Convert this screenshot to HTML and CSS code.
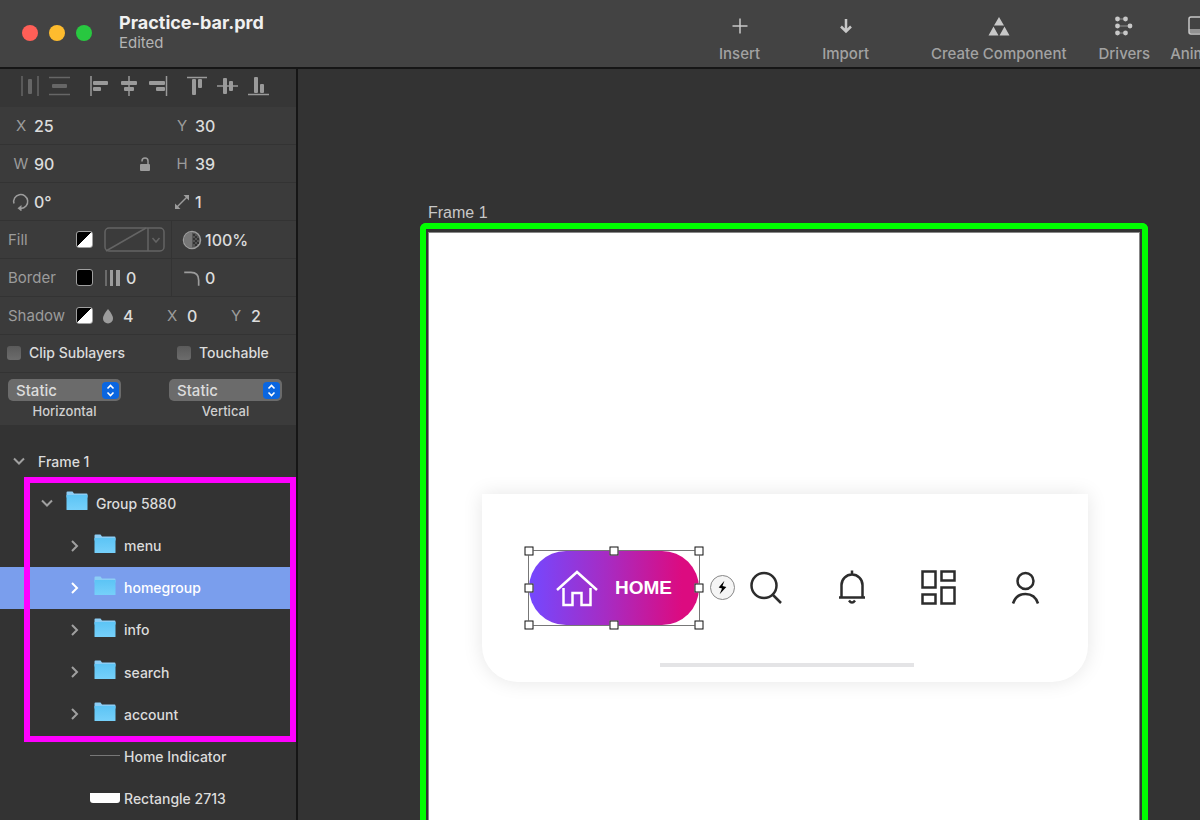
FILE: index.html
```html
<!DOCTYPE html>
<html lang="en">
<head>
  <meta charset="UTF-8">
  <title>Practice-bar.prd</title>
  <link rel="stylesheet" href="styles.css">
</head>
<body>

<svg class="defs">
  <linearGradient id="folder-fill" x1="0" y1="0" x2="0" y2="1">
    <stop offset="0" stop-color="#5cc4f5"/>
    <stop offset="1" stop-color="#76d0fa"/>
  </linearGradient>
  <symbol id="folder" viewBox="0 0 22 20">
    <path d="M.5 1.500q0-1 1-1h5l1.500 2h12.500q1 0 1 1v3H.5z" fill="#8ccdf5"/>
    <path d="M.5 4h21v14.500q0 .5-.5.5H1q-.5 0-.5-.5z" fill="url(#folder-fill)"/>
  </symbol>
  <symbol id="chevron-down" viewBox="0 0 12 12">
    <path d="M1 3.500l5 5 5-5" fill="none" stroke="currentColor" stroke-width="2"/>
  </symbol>
  <symbol id="chevron-right" viewBox="0 0 12 12">
    <path d="M3 1l5 5-5 5" fill="none" stroke="currentColor" stroke-width="2"/>
  </symbol>
  <symbol id="stepper" viewBox="0 0 17 17">
    <rect width="17" height="17" rx="4" fill="#0a66e0"/>
    <path d="M5.500 6.500l3-3 3 3M5.500 10.500l3 3 3-3" fill="none" stroke="#fff" stroke-width="1.600"/>
  </symbol>
</svg>

<header class="toolbar">
  <div class="lights">
    <span class="light red"></span>
    <span class="light yellow"></span>
    <span class="light green"></span>
  </div>
  <div class="title">
    <h1>Practice-bar.prd</h1>
    <p>Edited</p>
  </div>
  <div class="tools">
    <div class="tool-group wide">
      <button class="tool">
        <svg viewBox="0 0 24 24"><path d="M12 4.500v15M4.500 12h15" stroke="currentColor" stroke-width="1.500"/></svg>
        Insert
      </button>
      <button class="tool">
        <svg viewBox="0 0 24 24"><path d="M12 5v13M7 12.500l5 5 5-5" fill="none" stroke="currentColor" stroke-width="2.500"/></svg>
        Import
      </button>
      <button class="tool">
        <svg viewBox="0 0 24 24"><path d="M12 3l5 8.500H7zM6.500 12.500l5 9h-10zM17.500 12.500l5 9h-10z" fill="currentColor"/></svg>
        Create Component
      </button>
    </div>
    <div class="tool-group">
      <button class="tool">
        <svg viewBox="0 0 24 24">
          <path d="M5 5h8M5 12h13M5 19h8" stroke="currentColor" stroke-width="1" opacity=".6"/>
          <g fill="currentColor">
            <circle cx="5.500" cy="5" r="2.400"/><circle cx="13.500" cy="5" r="2.400"/>
            <circle cx="5.500" cy="12" r="2.400"/><circle cx="18" cy="12" r="2.400"/>
            <circle cx="5.500" cy="19" r="2.400"/><circle cx="13.500" cy="19" r="2.400"/>
          </g>
        </svg>
        Drivers
      </button>
      <button class="tool">
        <svg viewBox="0 0 24 24"><rect x="1" y="3" width="22" height="17" rx="2" fill="none" stroke="currentColor" stroke-width="1.500"/><path d="M1 15h22v4H1z" fill="currentColor" opacity=".6"/></svg>
        Animate
      </button>
    </div>
  </div>
</header>

<div class="workspace">
  <aside class="sidebar">
    <div class="align-bar">
      <div class="align-group dim">
        <button aria-label="Distribute horizontally"><svg viewBox="0 0 22 22"><path d="M3 1v20M19 1v20" stroke="currentColor" stroke-width="1.500"/><rect x="9" y="4" width="4" height="15" rx="1" fill="currentColor"/></svg></button>
        <button aria-label="Distribute vertically"><svg viewBox="0 0 22 22"><path d="M0 2.500h21M0 19.500h21" stroke="currentColor" stroke-width="1.500"/><rect x="3" y="9" width="15" height="4" rx="1" fill="currentColor"/></svg></button>
      </div>
      <div class="align-group">
        <button aria-label="Align left"><svg viewBox="0 0 22 22"><path d="M3 1v20" stroke="currentColor" stroke-width="1.500"/><rect x="5" y="6" width="15" height="4" rx="1" fill="currentColor"/><rect x="5" y="12" width="8" height="4" rx="1" fill="currentColor"/></svg></button>
        <button aria-label="Align center"><svg viewBox="0 0 22 22"><path d="M11 1v20" stroke="currentColor" stroke-width="1.500"/><rect x="3" y="6" width="16" height="4" rx="1" fill="currentColor"/><rect x="6" y="12" width="10" height="4" rx="1" fill="currentColor"/></svg></button>
        <button aria-label="Align right"><svg viewBox="0 0 22 22"><path d="M18.500 1v20" stroke="currentColor" stroke-width="1.500"/><rect x="1" y="6" width="16" height="4" rx="1" fill="currentColor"/><rect x="8" y="12" width="9" height="4" rx="1" fill="currentColor"/></svg></button>
      </div>
      <div class="align-group">
        <button aria-label="Align top"><svg viewBox="0 0 22 22"><path d="M0 2.500h20" stroke="currentColor" stroke-width="1.500"/><rect x="5" y="4" width="4" height="16" rx="1" fill="currentColor"/><rect x="11" y="4" width="4" height="9" rx="1" fill="currentColor"/></svg></button>
        <button aria-label="Align middle"><svg viewBox="0 0 22 22"><path d="M0 11h21" stroke="currentColor" stroke-width="1.500"/><rect x="6" y="3" width="4" height="16" rx="1" fill="currentColor"/><rect x="12" y="6" width="4" height="10" rx="1" fill="currentColor"/></svg></button>
        <button aria-label="Align bottom"><svg viewBox="0 0 22 22"><path d="M1 19.500h21" stroke="currentColor" stroke-width="1.500"/><rect x="7" y="2" width="4" height="16" rx="1" fill="currentColor"/><rect x="13" y="9" width="4" height="9" rx="1" fill="currentColor"/></svg></button>
      </div>
    </div>

    <div class="row">
      <div class="cell">
        <label for="pos-x">X</label>
        <input type="text" id="pos-x" value="25">
      </div>
      <div class="cell">
        <label for="pos-y">Y</label>
        <input type="text" id="pos-y" value="30">
      </div>
    </div>
    <div class="row">
      <div class="cell">
        <label for="width">W</label>
        <input type="text" id="width" value="90">
        <button class="lock" aria-label="Lock ratio"><svg viewBox="0 0 12 14"><rect x="1" y="7" width="10" height="7" rx="1" fill="currentColor"/><path d="M3 4.500V4a3 3 0 0 1 6 0v3" fill="none" stroke="currentColor" stroke-width="1.500"/></svg></button>
      </div>
      <div class="cell">
        <label for="height">H</label>
        <input type="text" id="height" value="39">
      </div>
    </div>
    <div class="row">
      <div class="cell">
        <label for="rotation" aria-label="Rotation"><svg viewBox="0 0 18 18"><path d="M2 10.500A7 7 0 1 1 9 15.500" fill="none" stroke="currentColor" stroke-width="1.500"/><path d="M9.500 12v6.500L5.500 15.200z" fill="currentColor"/></svg></label>
        <input type="text" id="rotation" value="0°">
      </div>
      <div class="cell">
        <label for="scale" aria-label="Scale"><svg viewBox="0 0 18 18"><path d="M4 14L14 4" stroke="currentColor" stroke-width="1.500"/><path d="M10.500 2H16v5.500zM2 10.500V16h5.500z" fill="currentColor"/></svg></label>
        <input type="text" id="scale" value="1">
      </div>
    </div>

    <div class="row paint">
      <div class="cell">
        <span class="name">Fill</span>
        <button class="swatch half" aria-label="Fill colour"></button>
        <button class="picker" aria-label="Fill type">
          <svg viewBox="0 0 61 25"><rect x="1" y="1" width="59" height="23" rx="4"/><path d="M2 24L42 1M44 1v23"/><path d="M48.500 11l3.500 4 3.500-4"/></svg>
        </button>
      </div>
      <div class="cell">
        <label for="opacity" aria-label="Opacity"><svg viewBox="0 0 20 20"><circle cx="10" cy="10" r="8.500" fill="#555" stroke="currentColor" stroke-width="1.500"/><path d="M10 2a8 8 0 0 0 0 16z" fill="#777"/><path d="M11 4h2v2h-2zM13 6h2v2h-2zM11 8h2v2h-2zM15 8h2v2h-2zM13 10h2v2h-2zM11 12h2v2h-2zM15 12h2v2h-2zM13 14h2v2h-2z" fill="#333"/></svg></label>
        <input type="text" id="opacity" value="100%">
      </div>
    </div>
    <div class="row paint">
      <div class="cell">
        <span class="name">Border</span>
        <button class="swatch" aria-label="Border colour"></button>
        <label for="border-width" aria-label="Border width"><svg viewBox="0 0 16 18"><path d="M1 1v16" stroke="currentColor" stroke-width="1"/><path d="M6.500 1v16" stroke="currentColor" stroke-width="3"/><path d="M13 1v16" stroke="currentColor" stroke-width="4"/></svg></label>
        <input type="text" id="border-width" value="0">
      </div>
      <div class="cell">
        <label for="radius" aria-label="Corner radius"><svg viewBox="0 0 18 18"><path d="M2 4h6q7 0 7 7v5" fill="none" stroke="currentColor" stroke-width="1.500"/></svg></label>
        <input type="text" id="radius" value="0">
      </div>
    </div>
    <div class="row shadow">
      <span class="name">Shadow</span>
      <button class="swatch half" aria-label="Shadow colour"></button>
      <label for="blur" aria-label="Blur"><svg viewBox="0 0 12 16"><path d="M6 1q5 6 5 9.500a5 5 0 0 1-10 0Q1 7 6 1z" fill="currentColor"/></svg></label>
      <input type="text" id="blur" value="4">
      <label for="shadow-x">X</label>
      <input type="text" id="shadow-x" value="0">
      <label for="shadow-y">Y</label>
      <input type="text" id="shadow-y" value="2">
    </div>
    <div class="row checks">
      <label><input type="checkbox"> Clip Sublayers</label>
      <label><input type="checkbox"> Touchable</label>
    </div>
    <div class="row selects">
      <div class="field">
        <div class="select">
          <select id="horizontal"><option>Static</option></select>
          <svg><use href="#stepper"/></svg>
        </div>
        <label for="horizontal">Horizontal</label>
      </div>
      <div class="field">
        <div class="select">
          <select id="vertical"><option>Static</option></select>
          <svg><use href="#stepper"/></svg>
        </div>
        <label for="vertical">Vertical</label>
      </div>
    </div>

    <ul class="layers">
      <li class="layer root"><svg class="chevron"><use href="#chevron-down"/></svg>Frame 1</li>
      <li class="layer group"><svg class="chevron"><use href="#chevron-down"/></svg><svg class="folder"><use href="#folder"/></svg>Group 5880</li>
      <li class="layer"><svg class="chevron"><use href="#chevron-right"/></svg><svg class="folder"><use href="#folder"/></svg>menu</li>
      <li class="layer selected"><svg class="chevron"><use href="#chevron-right"/></svg><svg class="folder"><use href="#folder"/></svg>homegroup</li>
      <li class="layer"><svg class="chevron"><use href="#chevron-right"/></svg><svg class="folder"><use href="#folder"/></svg>info</li>
      <li class="layer"><svg class="chevron"><use href="#chevron-right"/></svg><svg class="folder"><use href="#folder"/></svg>search</li>
      <li class="layer"><svg class="chevron"><use href="#chevron-right"/></svg><svg class="folder"><use href="#folder"/></svg>account</li>
      <li class="layer shape"><span class="thumb line"></span>Home Indicator</li>
      <li class="layer shape"><span class="thumb rect"></span>Rectangle 2713</li>
      <li class="highlight" aria-hidden="true"></li>
    </ul>
  </aside>

  <main class="canvas">
    <p class="frame-name">Frame 1</p>
    <div class="frame">
      <div class="artboard">
        <div class="card">
          <nav class="tabs">
            <div class="selection">
              <button class="home">
                <svg viewBox="0 0 42 38" fill="none" stroke="#fff" stroke-width="2.500"><path d="M1 21L21 3l20 18M7.500 19v17h9V24h9v12h9V19"/></svg>
                HOME
              </button>
              <i class="handle nw"></i><i class="handle n"></i><i class="handle ne"></i>
              <i class="handle w"></i><i class="handle e"></i>
              <i class="handle sw"></i><i class="handle s"></i><i class="handle se"></i>
              <button class="bolt" aria-label="Interactions"><svg viewBox="0 0 24 24"><path d="M14 5l-6 7 3.500 1L9 19l7-7.500-4-1z" fill="#000"/></svg></button>
            </div>
            <button class="tab" aria-label="Search"><svg viewBox="0 0 40 40"><circle cx="18" cy="17.500" r="12.500"/><path d="M27 27l8 8"/></svg></button>
            <button class="tab" aria-label="Notifications"><svg viewBox="0 0 40 40"><path d="M19 2.500v5M6 29.500h26M8.500 29V17a10.500 10.500 0 0 1 21 0v12M16 32.500q3 4 6 0"/></svg></button>
            <button class="tab" aria-label="Dashboard"><svg viewBox="0 0 40 40"><path d="M3.500 3.500h13v16h-13zM22.500 3.500h13v9h-13zM3.500 26.500h13v9h-13zM22.500 19.500h13v16h-13z"/></svg></button>
            <button class="tab" aria-label="Account"><svg viewBox="0 0 40 40"><circle cx="20.500" cy="13" r="8"/><path d="M8 35.500q3-9.500 12.500-9.500T33 35.500"/></svg></button>
          </nav>
          <div class="indicator"></div>
        </div>
      </div>
    </div>
  </main>
</div>

</body>
</html>
```
FILE: styles.css
```css
* {
  box-sizing: border-box;
}

body {
  margin: 0;
  height: 100vh;
  display: flex;
  flex-direction: column;
  overflow: hidden;
  background: #333;
  color: #dcdcdc;
  font-family: Inter, "Liberation Sans", sans-serif;
  font-size: 15px;
}

button, input, select {
  font: inherit;
  color: inherit;
  background: none;
  border: none;
  padding: 0;
  margin: 0;
}

svg {
  display: block;
  flex: none;
}

.defs {
  position: absolute;
  width: 0;
  height: 0;
}

/* Toolbar */
.toolbar {
  flex: none;
  display: flex;
  align-items: center;
  height: 69px;
  padding-left: 22px;
  background: #434343;
  border-bottom: 2px solid #161616;
}

.lights {
  display: flex;
  gap: 11px;
  padding-bottom: 2px;
}

.light {
  width: 16px;
  height: 16px;
  border-radius: 50%;
}

.red {
  background: #ff5f57;
}

.yellow {
  background: #febc2e;
}

.green {
  background: #28c840;
}

.title {
  flex: none;
  margin-left: 27px;
  width: 600px;
  padding-bottom: 1px;
  line-height: 20px;
}

.title h1 {
  margin: 0;
  font-size: 18px;
  color: #f0f0f0;
}

.title p {
  margin: 0;
  color: #b4b4b4;
}

.tools, .tool-group {
  display: flex;
  flex: none;
}

.tools {
  gap: 32px;
  padding-top: 10px;
}

.tool-group {
  gap: 20px;
}

.wide {
  gap: 62px;
}

.tool {
  display: flex;
  flex-direction: column;
  align-items: center;
  gap: 6px;
  line-height: 20px;
  font-weight: 500;
  color: #a2a2a2;
}

.tool svg {
  width: 24px;
  height: 24px;
  color: #c8c8c8;
}

.workspace {
  flex: 1;
  display: flex;
  min-height: 0;
}

/* Sidebar */
.sidebar {
  flex: none;
  display: flex;
  flex-direction: column;
  width: 298px;
  border-right: 2px solid #161616;
}

.align-bar {
  display: flex;
  align-items: center;
  gap: 17px;
  height: 38px;
  padding-left: 19px;
  padding-bottom: 5px;
  background: #363636;
  color: #9a9a9a;
}

.align-group {
  display: flex;
  gap: 8px;
}

.align-group svg {
  width: 22px;
  height: 22px;
}

.dim {
  color: #666;
}

.row {
  display: grid;
  grid-template-columns: 161px 1fr;
  min-height: 38px;
  padding-left: 8px;
  background: #3b3b3b;
  border-bottom: 1px solid #333;
}

.cell {
  display: flex;
  align-items: center;
}

.cell label {
  display: flex;
  justify-content: center;
  flex: none;
  width: 26px;
}

.row label, .name {
  color: #9c9c9c;
}

.row input[type="text"] {
  width: 48px;
  font-size: 16px;
  font-weight: 500;
}

.cell svg {
  width: 18px;
  height: 18px;
}

.lock {
  margin-left: auto;
  margin-right: 18px;
  color: #9c9c9c;
}

.cell .lock svg {
  width: 12px;
  height: 14px;
}

.paint {
  grid-template-columns: 163px 1fr;
}

.paint .cell:last-child {
  border-left: 1px solid #333;
  padding-left: 7px;
}

.paint .cell:last-child svg {
  width: 20px;
  height: 20px;
}

.name {
  flex: none;
  width: 68px;
}

.swatch {
  flex: none;
  width: 17px;
  height: 17px;
  background: #000;
  border: 1px solid #a0a0a0;
  border-radius: 3px;
}

.half {
  background: linear-gradient(135deg, #000 50%, #fff 50%);
}

.picker {
  margin-left: 11px;
}

.cell .picker svg {
  width: 61px;
  height: 25px;
  fill: none;
  stroke: #646464;
  stroke-width: 1.5;
}

.paint .swatch + label {
  width: 33px;
  padding-left: 6px;
}

.row #border-width {
  width: 30px;
}

.shadow {
  display: flex;
  align-items: center;
}

.shadow label {
  display: flex;
  justify-content: center;
  width: 30px;
}

.shadow label svg {
  width: 12px;
  height: 16px;
}

.shadow input[type="text"] {
  width: 34px;
}

.checks {
  padding-left: 7px;
  padding-bottom: 2px;
  grid-template-columns: 170px 1fr;
}

.checks label {
  display: flex;
  align-items: center;
  gap: 8px;
  font-size: 14px;
  font-weight: 500;
  color: #dcdcdc;
}

.checks input {
  appearance: none;
  width: 14px;
  height: 14px;
  border-radius: 3px;
  background: linear-gradient(#5a5a5a, #6c6c6c);
}

.selects {
  grid-template-columns: 113px 113px;
  gap: 48px;
  padding-top: 6px;
  padding-bottom: 3px;
  border-bottom: none;
}

.field {
  display: flex;
  flex-direction: column;
  text-align: center;
}

.row .field label {
  font-size: 13px;
  line-height: 21px;
  font-weight: 500;
  color: #cfcfcf;
}

.select {
  position: relative;
}

.select select {
  appearance: none;
  display: block;
  width: 100%;
  height: 22px;
  padding-left: 8px;
  border-radius: 5px;
  background: #6b6b6b;
  font-size: 15px;
  font-weight: 500;
}

.select svg {
  position: absolute;
  top: 3px;
  right: 2px;
  width: 17px;
  height: 17px;
  pointer-events: none;
}

/* Layer list */
.layers {
  position: relative;
  flex: 1;
  display: flex;
  flex-direction: column;
  margin: 0;
  padding: 15px 0 0;
  list-style: none;
}

.layer {
  flex: 1;
  display: flex;
  align-items: center;
  max-height: 48px;
  padding-left: 69px;
  font-size: 14px;
  font-weight: 500;
}

.chevron {
  width: 12px;
  height: 12px;
  color: #a0a0a0;
}

.folder {
  width: 22px;
  height: 20px;
  margin: 0 8px 4px 13px;
}

.root {
  padding-left: 13px;
  gap: 13px;
}

.group {
  padding-left: 41px;
}

.selected {
  background: #7a9eed;
  color: #fff;
}

.selected .chevron {
  color: #fff;
}

.shape {
  padding-left: 90px;
}

.thumb {
  width: 30px;
  margin: 0 4px 2px 0;
}

.line {
  height: 1px;
  background: #777;
}

.rect {
  height: 10px;
  background: #fff;
  border-radius: 0 0 3px 3px;
}

.highlight {
  position: absolute;
  top: 52px;
  bottom: 78px;
  left: 24px;
  right: 0;
  border: 6px solid #f0f;
}

/* Canvas */
.canvas {
  flex: 1;
  display: flex;
  flex-direction: column;
  min-width: 0;
  padding: 134px 52px 0 122px;
}

.frame-name {
  margin: 0;
  padding-left: 8px;
  line-height: 20px;
  font-family: "Liberation Sans", sans-serif;
  font-size: 16px;
  color: #c8c8c8;
}

.frame {
  flex: 1;
  padding: 3px 2px 0;
  border: 6px solid #0f0;
  border-bottom: none;
  border-radius: 6px 6px 0 0;
}

.artboard {
  height: 100%;
  padding: 261px 51px 0 53px;
  background: #fff;
  border: 1px solid #888;
  border-bottom: none;
}

.card {
  padding: 56px 43px 15px 46px;
  border-radius: 0 0 36px 36px;
  background: #fff;
  box-shadow: 0 0 20px rgba(0, 0, 0, 0.1);
}

.tabs {
  display: flex;
  align-items: center;
  justify-content: space-between;
}

.selection {
  position: relative;
  border: 1px solid #777;
}

.home {
  display: flex;
  align-items: center;
  gap: 17px;
  width: 170px;
  height: 74px;
  padding-left: 27px;
  border-radius: 37px;
  background: linear-gradient(to right, #7448ff, #a62cc4 45%, #dc0b80 90%);
  color: #fff;
  font-family: "Liberation Sans", sans-serif;
  font-size: 19px;
  font-weight: bold;
}

.home svg {
  width: 42px;
  height: 38px;
}

.handle {
  position: absolute;
  width: 9px;
  height: 9px;
  background: #fff;
  border: 1px solid #111;
  transform: translate(-50%, -50%);
}

.nw, .n, .ne {
  top: 0;
}

.w, .e {
  top: 50%;
}

.sw, .s, .se {
  top: 100%;
}

.nw, .w, .sw {
  left: 0;
}

.n, .s {
  left: 50%;
}

.ne, .e, .se {
  left: 100%;
}

.bolt {
  position: absolute;
  top: 24px;
  left: 100%;
  margin-left: 11px;
  width: 25px;
  height: 25px;
  border: 1px solid #888;
  border-radius: 50%;
  background: #f5f5f5;
}

.tab svg {
  width: 40px;
  height: 40px;
  fill: none;
  stroke: #2c2c2c;
  stroke-width: 2.5;
}

.indicator {
  width: 254px;
  height: 4px;
  margin: 37px auto 0;
  background: #e4e4e6;
}
```
